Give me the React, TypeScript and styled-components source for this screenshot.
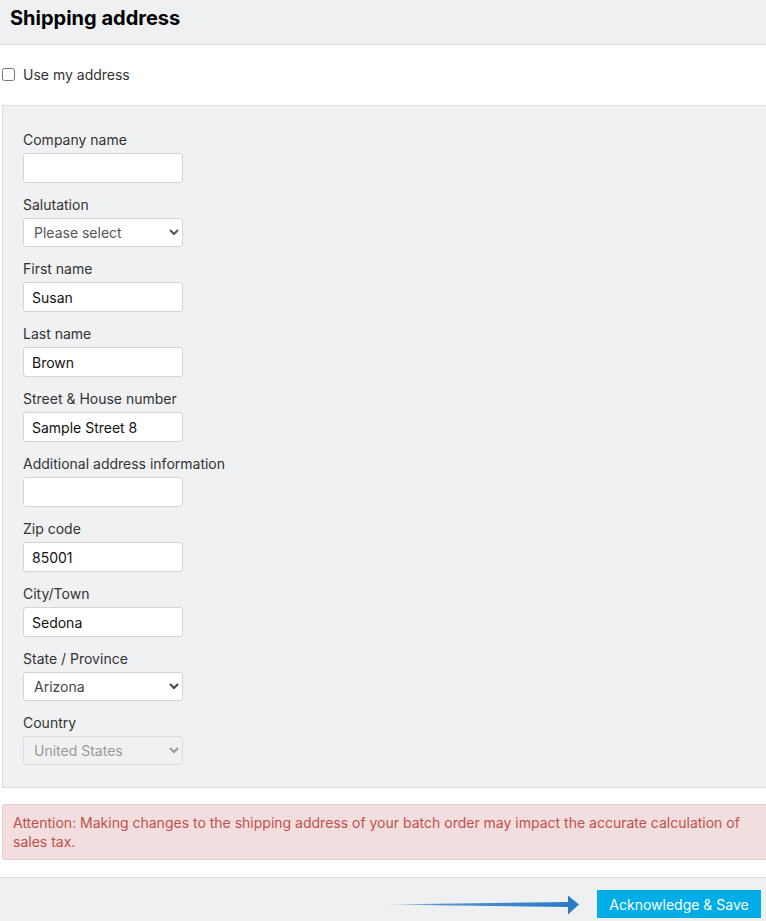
import React from 'react';
import styled, { createGlobalStyle } from 'styled-components';

const GlobalStyle = createGlobalStyle`
  html, body {
    margin: 0;
    padding: 0;
    background: #ffffff;
    overflow-x: hidden;
  }
  body {
    font-family: Inter, "Liberation Sans", Arial, sans-serif;
    font-size: 14px;
    color: #333333;
  }
`;

interface Field {
  label: string;
  kind: 'input' | 'select';
  value?: string;
  disabled?: boolean;
}

const fields: Field[] = [
  { label: 'Company name', kind: 'input', value: '' },
  { label: 'Salutation', kind: 'select', value: 'Please select' },
  { label: 'First name', kind: 'input', value: 'Susan' },
  { label: 'Last name', kind: 'input', value: 'Brown' },
  { label: 'Street & House number', kind: 'input', value: 'Sample Street 8' },
  { label: 'Additional address information', kind: 'input', value: '' },
  { label: 'Zip code', kind: 'input', value: '85001' },
  { label: 'City/Town', kind: 'input', value: 'Sedona' },
  { label: 'State / Province', kind: 'select', value: 'Arizona' },
  { label: 'Country', kind: 'select', value: 'United States', disabled: true },
];

const App: React.FC = () => {
  return (
    <Page>
      <GlobalStyle />
      <Header>
        <Title>Shipping address</Title>
      </Header>

      <CheckRow>
        <Checkbox type="checkbox" id="use-my-address" />
        <CheckLabel htmlFor="use-my-address">Use my address</CheckLabel>
      </CheckRow>

      <Panel>
        {fields.map((f) => (
          <FieldGroup key={f.label}>
            <Label>{f.label}</Label>
            {f.kind === 'input' ? (
              <TextInput type="text" defaultValue={f.value} />
            ) : (
              <Select defaultValue={f.value} disabled={f.disabled} $muted={f.value === 'Please select'}>
                <option>{f.value}</option>
              </Select>
            )}
          </FieldGroup>
        ))}
      </Panel>

      <Alert>
        Attention: Making changes to the shipping address of your batch order may impact the accurate
        calculation of sales tax.
      </Alert>

      <Footer>
        <Arrow width="196" height="20" viewBox="0 0 196 20">
          <defs>
            <linearGradient id="arrowFade" x1="0" y1="0" x2="1" y2="0">
              <stop offset="0" stopColor="#2b7cc7" stopOpacity="0.15" />
              <stop offset="0.3" stopColor="#2b7cc7" stopOpacity="0.8" />
              <stop offset="1" stopColor="#2b7cc7" />
            </linearGradient>
          </defs>
          <polygon points="0,9.5 186,7 186,12" fill="url(#arrowFade)" />
          <polygon points="185,0.5 196,9.5 185,19.5" fill="#2b7cc7" />
        </Arrow>
        <SaveButton type="button">Acknowledge &amp; Save</SaveButton>
      </Footer>
    </Page>
  );
};

const Page = styled.div`
  width: 100%;
  min-height: 921px;
  display: flex;
  flex-direction: column;
`;

const Header = styled.header`
  height: 45px;
  box-sizing: border-box;
  background: #eff0f2;
  border-bottom: 1px solid #dcdcdc;
  padding: 6px 10px 0;
`;

const Title = styled.h2`
  margin: 0;
  font-size: 20px;
  line-height: 24px;
  font-weight: 700;
  color: #000000;
`;

const CheckRow = styled.div`
  height: 60px;
  display: flex;
  align-items: center;
  padding-left: 2px;
  padding-bottom: 1px;
  box-sizing: border-box;
  gap: 8px;
`;

const Checkbox = styled.input`
  margin: 0;
  width: 13px;
  height: 13px;
`;

const CheckLabel = styled.label`
  font-size: 14px;
  color: #333333;
`;

const Panel = styled.div`
  margin-left: 2px;
  margin-right: -20px;
  background: #f0f1f3;
  border: 1px solid #dcdcdc;
  padding: 25px 20px 9px;
  display: flex;
  flex-direction: column;
`;

const FieldGroup = styled.div`
  display: flex;
  flex-direction: column;
  margin-bottom: 13px;
`;

const Label = styled.label`
  font-size: 14px;
  line-height: 17px;
  color: #333333;
  margin-bottom: 5px;
`;

const TextInput = styled.input`
  box-sizing: border-box;
  width: 160px;
  height: 30px;
  border: 1px solid #d3d4d6;
  border-radius: 3px;
  background: #ffffff;
  padding: 0 8px;
  font-family: Inter, "Liberation Sans", Arial, sans-serif;
  font-size: 14px;
  color: #111111;
  outline: none;
`;

const Select = styled.select<{ $muted?: boolean }>`
  box-sizing: border-box;
  width: 160px;
  height: 29px;
  border: 1px solid #d3d4d6;
  border-radius: 3px;
  background: #ffffff;
  padding: 0 4px 0 6px;
  font-family: Inter, "Liberation Sans", Arial, sans-serif;
  font-size: 14px;
  color: ${(p) => (p.$muted ? '#555555' : '#444444')};
  outline: none;

  &:disabled {
    background: #f0f1f3;
    color: #9a9a9a;
    border-color: #dcdddf;
    opacity: 1;
  }
`;

const Alert = styled.div`
  margin: 16px -20px 17px 2px;
  background: #f2dede;
  border: 1px solid #ebcccf;
  border-radius: 3px;
  padding: 8px 30px 8px 10px;
  font-size: 14px;
  line-height: 19px;
  color: #c0504d;
`;

const Footer = styled.footer`
  flex: 1;
  background: #eff0f2;
  border-top: 1px solid #dcdcdc;
  padding: 12px 5px 0 0;
  display: flex;
  justify-content: flex-end;
  align-items: flex-start;
`;

const Arrow = styled.svg`
  margin-top: 5px;
  margin-right: 18px;
`;

const SaveButton = styled.button`
  width: 164px;
  height: 28px;
  border: none;
  background: #00ade6;
  color: #ffffff;
  font-family: Inter, "Liberation Sans", Arial, sans-serif;
  font-size: 14px;
  padding: 0;
  cursor: pointer;
`;

export default App;
